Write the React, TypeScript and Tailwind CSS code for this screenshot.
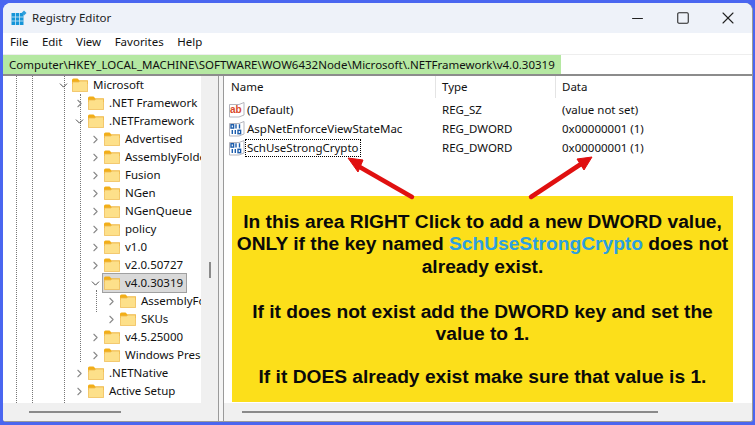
import React from 'react';
import { Minus, Square, X, ChevronRight, ChevronDown } from 'lucide-react';

const ui = { fontFamily: '"Noto Sans", sans-serif' };

type Node = { label: string; level: number; open?: boolean; selected?: boolean };

const nodes: Node[] = [
  { label: 'Microsoft', level: 0, open: true },
  { label: '.NET Framework', level: 1 },
  { label: '.NETFramework', level: 1, open: true },
  { label: 'Advertised', level: 2 },
  { label: 'AssemblyFolders', level: 2 },
  { label: 'Fusion', level: 2 },
  { label: 'NGen', level: 2 },
  { label: 'NGenQueue', level: 2 },
  { label: 'policy', level: 2 },
  { label: 'v1.0', level: 2 },
  { label: 'v2.0.50727', level: 2 },
  { label: 'v4.0.30319', level: 2, open: true, selected: true },
  { label: 'AssemblyFoldersEx', level: 3 },
  { label: 'SKUs', level: 3 },
  { label: 'v4.5.25000', level: 2 },
  { label: 'Windows Presentation', level: 2 },
  { label: '.NETNative', level: 1 },
  { label: 'Active Setup', level: 1 },
];

const indent = ['w-[68px]', 'w-[84px]', 'w-[100px]', 'w-[116px]'];

const FolderIcon = () => (
  <svg width="16" height="14" viewBox="0 0 16 14" className="shrink-0">
    <path d="M0 2 Q0 0.5 1.5 0.5 H5.5 L7.5 2.5 H16 V6 H0 Z" fill="#f2ae18" />
    <path d="M0.4 4 H6.5 L8 3 H15.6 V13.6 H0.4 Z" fill="#fde08a" stroke="#edb94f" strokeWidth="0.8" />
  </svg>
);

const RegSzIcon = () => (
  <svg width="16" height="16" viewBox="0 0 16 16" className="shrink-0">
    <path d="M0.5 2.5 H10 L15 0.5 V13 L10 15 H0.5 Z" fill="#fff" stroke="#b5b5bd" strokeWidth="1" />
    <text x="1" y="11" fontSize="10" fontWeight="700" fill="#d9482a" fontFamily="Liberation Sans, sans-serif">ab</text>
  </svg>
);

const RegBinIcon = () => (
  <svg width="16" height="16" viewBox="0 0 16 16" className="shrink-0">
    <path d="M0.5 2.5 H10 L15 0.5 V13 L10 15 H0.5 Z" fill="#fff" stroke="#b5b5bd" strokeWidth="1" />
    <g fill="none" stroke="#1b5cab" strokeWidth="1.4">
      <rect x="2" y="3.7" width="2.6" height="3.4" />
      <path d="M7 3.2 V7.6" />
      <path d="M10.5 3.2 V7.6" />
      <path d="M3.3 9 V13" />
      <path d="M6.3 9 V13" />
      <rect x="9" y="9.3" width="2.6" height="3.4" />
    </g>
  </svg>
);

const TreeRow = ({ node }: { node: Node }) => (
  <div className="flex h-[18px] items-center">
    <div className={`${indent[node.level]} flex shrink-0 justify-end`}>
      {node.open ? (
        <ChevronDown size={13} strokeWidth={1.6} className="mr-[1px] text-[#333]" />
      ) : (
        <ChevronRight size={13} strokeWidth={2} className="mr-[1px] text-[#8a8a8a]" />
      )}
    </div>
    <div
      className={`flex h-[18px] items-center gap-[5px] pl-[1px] pr-[3px] ${
        node.selected ? 'bg-[#d9d9d9] outline outline-1 outline-[#a0a0a0]' : ''
      }`}
    >
      <FolderIcon />
      <span className="whitespace-nowrap text-[11.5px] text-[#111]">{node.label}</span>
    </div>
  </div>
);

const ValueRow = ({
  icon,
  name,
  type,
  data,
  focused,
}: {
  icon: React.ReactNode;
  name: string;
  type: string;
  data: string;
  focused?: boolean;
}) => (
  <div className="flex h-[19px] items-center text-[11.5px] text-[#111]">
    <div className="flex w-[218px] items-center pl-[5px]">
      {icon}
      <span className={focused ? 'border border-dotted border-black px-[1px] leading-[16px]' : 'px-[2px]'}>{name}</span>
    </div>
    <div className="w-[120px]">{type}</div>
    <div>{data}</div>
  </div>
);

const App: React.FC = () => {
  return (
    <div className="h-[425px] w-[755px] overflow-hidden bg-[#4a66f0] pb-[3px] pl-[3px] pr-[2px] pt-[3px]" style={ui}>
      <div className="flex h-full flex-col overflow-hidden rounded-b-[3px] rounded-t-[8px] border-b border-r border-[#9a9a9a] bg-white">
        {/* title bar */}
        <div className="flex h-[30px] shrink-0 items-center bg-[#eef2f9] pl-[8px]">
          <svg width="16" height="16" viewBox="0 0 16 16" className="shrink-0">
            <rect x="0.5" y="3" width="12" height="12" fill="#1695d8" />
            <path d="M0.5 7 H12.5 M0.5 11 H12.5 M4.5 3 V15 M8.5 3 V15" stroke="#cfe9f7" strokeWidth="0.8" />
            <path d="M13 0.5 L15.5 3 L13 5.5 L10.5 3 Z" fill="#2f9fdc" />
          </svg>
          <span className="ml-[5px] text-[11.5px] text-[#222]">Registry Editor</span>
          <div className="ml-auto flex items-center text-[#222]">
            <div className="flex w-[46px] justify-center"><Minus size={17} strokeWidth={1.5} /></div>
            <div className="flex w-[46px] justify-center"><Square size={14} strokeWidth={1.8} /></div>
            <div className="flex w-[46px] justify-center pr-[2px]"><X size={20} strokeWidth={1.3} /></div>
          </div>
        </div>

        {/* menu */}
        <div className="flex h-[18px] shrink-0 items-center gap-[13.5px] pl-[7px] text-[11.5px] text-[#111]">
          <span>File</span>
          <span>Edit</span>
          <span>View</span>
          <span>Favorites</span>
          <span>Help</span>
        </div>

        {/* address bar */}
        <div className="mt-[3px] flex h-[20px] shrink-0 items-center border-t border-[#eeeeee] bg-white">
          <span className="flex h-[19px] items-center bg-[#b5e8a2] px-[6px] text-[11.5px] text-[#111]">
            Computer\HKEY_LOCAL_MACHINE\SOFTWARE\WOW6432Node\Microsoft\.NETFramework\v4.0.30319
          </span>
        </div>

        {/* panes */}
        <div className="flex min-h-0 flex-1 border-t-2 border-[#8c8c8c]">
          {/* tree */}
          <div className="flex w-[215px] shrink-0 flex-col">
            <div className="flex min-h-0 flex-1">
              <div className="relative min-w-0 flex-1 overflow-hidden">
                <div className="absolute bottom-0 left-[13px] top-0 border-l border-dotted border-[#777]" />
                <div className="absolute bottom-0 left-[29px] top-0 border-l border-dotted border-[#777]" />
                <div className="absolute bottom-0 left-[61px] top-0 border-l border-dotted border-[#777]" />
                <div className="absolute left-[77px] top-[18px] h-[268px] border-l border-dotted border-[#777]" />
                <div className="absolute left-[93px] top-[214px] h-[22px] border-l border-dotted border-[#777]" />
                {nodes.map((n) => (
                  <div key={n.label} className="relative">
                    <TreeRow node={n} />
                  </div>
                ))}
              </div>
              <div className="flex w-[17px] shrink-0 justify-center bg-[#f0f0f0] pt-[186px]">
                <div className="h-[16px] w-[2px] bg-[#8a8a8a]" />
              </div>
            </div>
            <div className="flex h-[18px] shrink-0 items-center bg-[#f0f0f0] pl-[26px]">
              <div className="h-[2px] w-[92px] bg-[#8a8a8a]" />
            </div>
          </div>

          {/* splitter */}
          <div className="w-[6px] shrink-0 border-l border-r border-[#9a9a9a] bg-[#f4f4f4]" />

          {/* values */}
          <div className="relative flex min-w-0 flex-1 flex-col">
            <div className="flex h-[22px] shrink-0 items-center text-[11.5px] text-[#111]">
              <div className="w-[212px] border-r border-[#e4e4e4] pl-[7px] leading-[22px]">Name</div>
              <div className="w-[120px] border-r border-[#e4e4e4] pl-[6px] leading-[22px]">Type</div>
              <div className="pl-[6px]">Data</div>
            </div>
            <div className="pt-[2px]">
              <ValueRow icon={<RegSzIcon />} name="(Default)" type="REG_SZ" data="(value not set)" />
              <ValueRow icon={<RegBinIcon />} name="AspNetEnforceViewStateMac" type="REG_DWORD" data="0x00000001 (1)" />
              <ValueRow icon={<RegBinIcon />} name="SchUseStrongCrypto" type="REG_DWORD" data="0x00000001 (1)" focused />
            </div>

            <div className="min-h-0 flex-1 px-[8px] pt-[39px]">
              <div
                className="flex h-[206px] w-[501px] flex-col items-center justify-center bg-[#fcdf1a] pt-[1px] text-center text-[19.2px] font-bold leading-[22.6px] text-[#0a0a0a]"
                style={{ fontFamily: '"Liberation Sans", Arial, sans-serif' }}
              >
                <p>
                  In this area RIGHT Click to add a new DWORD value,
                  <br />
                  ONLY if the key named <span className="text-[#2d9fe0]">SchUseStrongCrypto</span> does not
                  <br />
                  already exist.
                </p>
                <p className="mt-[22px]">
                  If it does not exist add the DWORD key and set the
                  <br />
                  value to 1.
                </p>
                <p className="mt-[20px]">If it DOES already exist make sure that value is 1.</p>
              </div>
            </div>

            <div className="flex h-[18px] shrink-0 items-center bg-[#f0f0f0] pl-[18px]">
              <div className="h-[2px] w-[416px] bg-[#8a8a8a]" />
            </div>

            {/* annotation arrows */}
            <svg className="pointer-events-none absolute left-0 top-0" width="526" height="130" viewBox="0 0 526 130">
              <g fill="#e01010" stroke="#e01010">
                <path d="M188 121 L134 90" strokeWidth="4.5" strokeLinecap="round" />
                <path d="M124 82 L139 84 L134 96 Z" strokeWidth="1" />
                <path d="M307 121 L357 88" strokeWidth="4.5" strokeLinecap="round" />
                <path d="M368 81 L353 83 L360 94 Z" strokeWidth="1" />
              </g>
            </svg>
          </div>
        </div>
      </div>
    </div>
  );
};

export default App;
